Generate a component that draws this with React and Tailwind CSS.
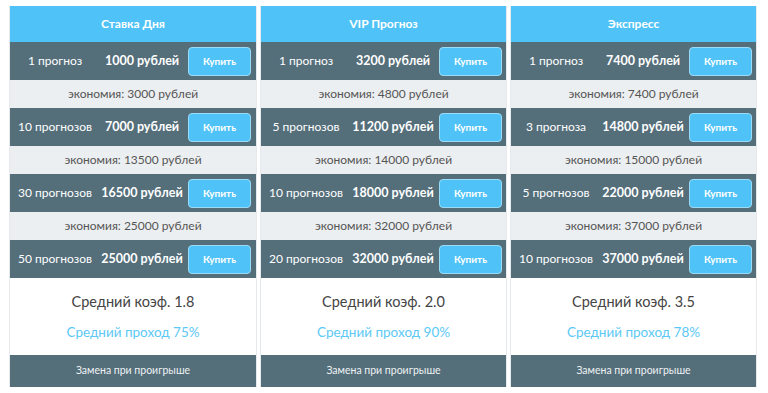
import React from "react";

const plans = [
  {
    title: "Ставка Дня",
    rows: [
      ["1 прогноз", "1000 рублей"],
      ["10 прогнозов", "7000 рублей"],
      ["30 прогнозов", "16500 рублей"],
      ["50 прогнозов", "25000 рублей"],
    ],
    savings: ["экономия: 3000 рублей", "экономия: 13500 рублей", "экономия: 25000 рублей"],
    coef: "Средний коэф. 1.8",
    pass: "Средний проход 75%",
  },
  {
    title: "VIP Прогноз",
    rows: [
      ["1 прогноз", "3200 рублей"],
      ["5 прогнозов", "11200 рублей"],
      ["10 прогнозов", "18000 рублей"],
      ["20 прогнозов", "32000 рублей"],
    ],
    savings: ["экономия: 4800 рублей", "экономия: 14000 рублей", "экономия: 32000 рублей"],
    coef: "Средний коэф. 2.0",
    pass: "Средний проход 90%",
  },
  {
    title: "Экспресс",
    rows: [
      ["1 прогноз", "7400 рублей"],
      ["3 прогноза", "14800 рублей"],
      ["5 прогнозов", "22000 рублей"],
      ["10 прогнозов", "37000 рублей"],
    ],
    savings: ["экономия: 7400 рублей", "экономия: 15000 рублей", "экономия: 37000 рублей"],
    coef: "Средний коэф. 3.5",
    pass: "Средний проход 78%",
  },
];

function Row({ label, price }) {
  return (
    <div className="flex h-[38px] items-center bg-[#546e7a] text-white">
      <div className="w-[90px] whitespace-nowrap text-center text-[12px]">{label}</div>
      <div className="w-[84px] whitespace-nowrap text-center text-[12.5px] font-bold">{price}</div>
      <div className="ml-[4px] flex h-[29px] w-[63px] items-center justify-center rounded-[4px] border border-[#9adcf8] bg-[#4fc3f7] text-[10px] font-bold text-white">
        Купить
      </div>
    </div>
  );
}

function Saving({ text }) {
  return (
    <div className="flex h-[28px] items-center justify-center whitespace-nowrap bg-[#eceff1] text-[12px] text-[#555]">
      {text}
    </div>
  );
}

function Plan({ plan, w }) {
  return (
    <div className={`flex flex-col border-x border-[#e6eaec] ${w}`}>
      <div className="flex h-[36px] items-center justify-center bg-[#4fc3f7] text-[12px] font-bold text-white">
        {plan.title}
      </div>
      <Row label={plan.rows[0][0]} price={plan.rows[0][1]} />
      <Saving text={plan.savings[0]} />
      <Row label={plan.rows[1][0]} price={plan.rows[1][1]} />
      <Saving text={plan.savings[1]} />
      <Row label={plan.rows[2][0]} price={plan.rows[2][1]} />
      <Saving text={plan.savings[2]} />
      <Row label={plan.rows[3][0]} price={plan.rows[3][1]} />
      <div className="flex h-[77px] flex-col items-center justify-center gap-[12px] bg-white">
        <div className="text-[14.5px] leading-[18px] text-[#444]">{plan.coef}</div>
        <div className="text-[13.5px] leading-[18px] text-[#5cc8f5]">{plan.pass}</div>
      </div>
      <div className="flex h-[32px] items-center justify-center bg-[#546e7a] text-[10.5px] text-[#eef2f4]">
        Замена при проигрыше
      </div>
    </div>
  );
}

export default function App() {
  return (
    <div
      className="h-[393px] w-[768px] bg-white"
      style={{ fontFamily: 'Lato, "Noto Sans", sans-serif' }}
    >
      <div className="flex gap-[3px] pl-[9px] pt-[6px]">
        <Plan plan={plans[0]} w="w-[248px]" />
        <Plan plan={plans[1]} w="w-[247px]" />
        <Plan plan={plans[2]} w="w-[247px]" />
      </div>
    </div>
  );
}
